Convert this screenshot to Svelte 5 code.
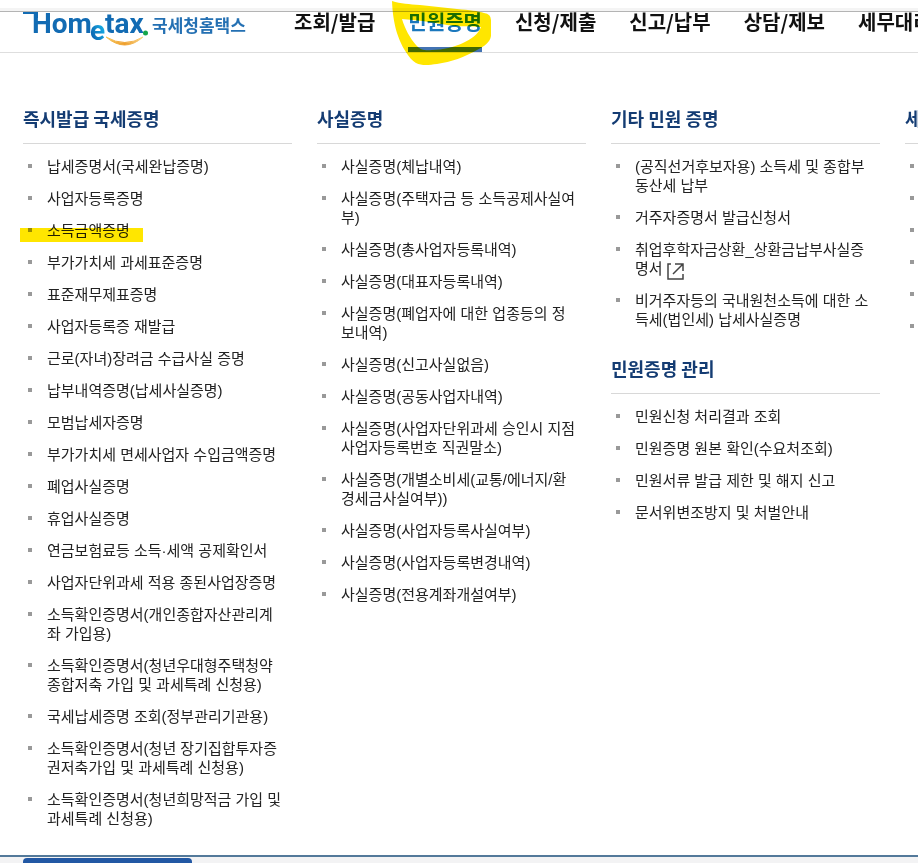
<script>
  const nav = ['조회/발급', '민원증명', '신청/제출', '신고/납부', '상담/제보', '세무대리'];
  const current = '민원증명';
  const marked = '소득금액증명';

  const columns = [
    [
      {
        title: '즉시발급 국세증명',
        items: [
          '납세증명서(국세완납증명)',
          '사업자등록증명',
          '소득금액증명',
          '부가가치세 과세표준증명',
          '표준재무제표증명',
          '사업자등록증 재발급',
          '근로(자녀)장려금 수급사실 증명',
          '납부내역증명(납세사실증명)',
          '모범납세자증명',
          '부가가치세 면세사업자 수입금액증명',
          '폐업사실증명',
          '휴업사실증명',
          '연금보험료등 소득·세액 공제확인서',
          '사업자단위과세 적용 종된사업장증명',
          '소득확인증명서(개인종합자산관리계좌 가입용)',
          '소득확인증명서(청년우대형주택청약종합저축 가입 및 과세특례 신청용)',
          '국세납세증명 조회(정부관리기관용)',
          '소득확인증명서(청년 장기집합투자증권저축가입 및 과세특례 신청용)',
          '소득확인증명서(청년희망적금 가입 및 과세특례 신청용)'
        ]
      }
    ],
    [
      {
        title: '사실증명',
        items: [
          '사실증명(체납내역)',
          '사실증명(주택자금 등 소득공제사실여부)',
          '사실증명(총사업자등록내역)',
          '사실증명(대표자등록내역)',
          '사실증명(폐업자에 대한 업종등의 정보내역)',
          '사실증명(신고사실없음)',
          '사실증명(공동사업자내역)',
          '사실증명(사업자단위과세 승인시 지점 사업자등록번호 직권말소)',
          '사실증명(개별소비세(교통/에너지/환경세금사실여부))',
          '사실증명(사업자등록사실여부)',
          '사실증명(사업자등록변경내역)',
          '사실증명(전용계좌개설여부)'
        ]
      }
    ],
    [
      {
        title: '기타 민원 증명',
        items: [
          '(공직선거후보자용) 소득세 및 종합부동산세 납부',
          '거주자증명서 발급신청서',
          '취업후학자금상환_상환금납부사실증명서',
          '비거주자등의 국내원천소득에 대한 소득세(법인세) 납세사실증명'
        ]
      },
      {
        title: '민원증명 관리',
        items: [
          '민원신청 처리결과 조회',
          '민원증명 원본 확인(수요처조회)',
          '민원서류 발급 제한 및 해지 신고',
          '문서위변조방지 및 처벌안내'
        ]
      }
    ],
    [{ title: '세', items: ['', '', '', '', '', ''] }]
  ];
  const external = '취업후학자금상환_상환금납부사실증명서';
</script>

<div class="page">
  <div class="strip"></div>
  <header>
    <a class="logo" href="#home" aria-label="Hometax 국세청홈택스">
      <svg width="228" height="36" viewBox="0 0 228 36">
        <defs>
          <linearGradient id="e" x1="0" y1="1" x2="1" y2="0">
            <stop offset="0.2" stop-color="#0b62ae" />
            <stop offset="0.8" stop-color="#18b4ea" />
          </linearGradient>
          <linearGradient id="smile">
            <stop offset="0" stop-color="#f7c65c" />
            <stop offset="0.5" stop-color="#ee9f2d" />
            <stop offset="1" stop-color="#f9d384" />
          </linearGradient>
        </defs>
        <path d="M0 0H15V6H11V2H0Z" fill="#126bb3" />
        <g class="latin">
          <text x="9" y="21">Hom</text>
          <text x="82" y="21">tax</text>
          <text class="e" x="67" y="28">e</text>
        </g>
        <circle cx="122.500" cy="21" r="2.500" fill="#15a64a" />
        <path d="M83 25Q102 41 120 25Q102 36 83 25Z" fill="url(#smile)" stroke="url(#smile)" />
        <text class="korean" x="129" y="20">국세청홈택스</text>
      </svg>
    </a>
    <nav>
      {#each nav as label}
        <a href="#menu" class:current={label === current}>
          {label}
          {#if label === current}
            <svg class="circle" width="102" height="68" viewBox="391 0 102 68" aria-hidden="true">
              <path
                fill-rule="evenodd"
                d="M392 1C401 4 409 4 420 5L457 9C470 10 478 11 484 13Q491 14 491 20V36C490 42 485 46 477 50C465 57 451 62 437 64C429 65 422 66 416 63C410 59 408 55 404 49C398 38 393 25 392 1ZM402 19C405 29 410 38 416 45C420 50 426 51 432 50C443 50 454 47 463 43C471 39 478 35 481 27C470 26 458 27 447 25C432 22 416 20 402 19Z"
              />
            </svg>
          {/if}
        </a>
      {/each}
    </nav>
  </header>

  <main>
    {#each columns as sections}
      <div class="column">
        {#each sections as section}
          <section>
            <h2>{section.title}</h2>
            <ul>
              {#each section.items as item}
                <li class:marked={item === marked}>
                  <a href="#item">{item}{#if item === external}<svg class="ext" width="17" height="17" viewBox="0 0 17 17" aria-hidden="true"><path d="M4 1H1V16H16V11M8 1H16V8M16 1L6 11" /></svg>{/if}</a>
                </li>
              {/each}
            </ul>
          </section>
        {/each}
      </div>
    {/each}
  </main>

  <footer><div class="tab"></div></footer>
</div>

<style>
  .page {
    display: flex;
    flex-direction: column;
    box-sizing: border-box;
    min-height: 100vh;
    padding-top: 8px;
    overflow: hidden;
    background: #fff;
    color: #222;
    font-family: 'Liberation Sans', 'Noto Sans CJK KR', sans-serif;
  }
  a {
    color: inherit;
    text-decoration: none;
  }
  .strip {
    height: 3px;
    background: #f4f4f4;
    border-bottom: 1px solid #b4b4b4;
  }
  header {
    display: flex;
    height: 40px;
    padding-left: 23px;
    border-bottom: 1px solid #dedede;
  }
  .logo {
    flex: none;
    width: 271px;
  }
  .logo svg {
    display: block;
    overflow: visible;
  }
  .latin {
    fill: #126bb3;
    font-family: Roboto, 'Liberation Sans', sans-serif;
    font-size: 28px;
    font-weight: 700;
  }
  .e {
    fill: url(#e);
  }
  .korean {
    fill: #2470b3;
    font-family: 'Noto Sans CJK KR', sans-serif;
    font-size: 17px;
    font-weight: 700;
  }
  nav {
    display: flex;
    flex: none;
    gap: 33px;
    color: #111;
    font-family: 'Noto Sans CJK KR', sans-serif;
    font-size: 20px;
    font-weight: 700;
    line-height: 20px;
  }
  nav a {
    position: relative;
    box-sizing: border-box;
    height: 40px;
    white-space: nowrap;
  }
  nav .current {
    color: #1b78bd;
    border-bottom: 5px solid #4273b3;
  }
  .circle {
    position: absolute;
    top: -12px;
    left: -17px;
    fill: #ffe600;
    mix-blend-mode: multiply;
    pointer-events: none;
  }
  main {
    display: flex;
    flex: 1;
    gap: 25px;
    padding: 54px 0 20px 23px;
  }
  .column {
    display: flex;
    flex: none;
    flex-direction: column;
    gap: 28px;
    width: 269px;
  }
  h2 {
    margin: 0 0 13px;
    padding-bottom: 13px;
    border-bottom: 1px solid #d8d8d8;
    color: #143c73;
    font-family: 'Noto Sans CJK KR', sans-serif;
    font-size: 18px;
    font-weight: 700;
    line-height: 23px;
  }
  ul {
    display: flex;
    flex-direction: column;
    gap: 13px;
    margin: 0;
    padding: 0;
    list-style: none;
  }
  li {
    position: relative;
    min-height: 19px;
    padding: 0 9px 0 24px;
    font-size: 15px;
    line-height: 19px;
    word-break: break-all;
  }
  li::before {
    content: '';
    position: absolute;
    top: 7px;
    left: 5px;
    width: 4px;
    height: 4px;
    background: #999;
  }
  .marked::after {
    content: '';
    position: absolute;
    top: 7px;
    left: -3px;
    width: 123px;
    height: 14px;
    background: #ffe600;
    mix-blend-mode: multiply;
    pointer-events: none;
  }
  .ext {
    margin: -4px 0 -4px 4px;
    vertical-align: -2px;
    fill: none;
    stroke: #444;
    stroke-width: 1.5;
  }
  footer {
    height: 6px;
    padding-left: 23px;
    overflow: hidden;
    background: #f3f3f4;
    border-top: 2px solid #53799a;
  }
  .tab {
    width: 169px;
    height: 5px;
    margin-top: 1px;
    border-radius: 4px 4px 0 0;
    background: #2258a4;
  }
</style>
